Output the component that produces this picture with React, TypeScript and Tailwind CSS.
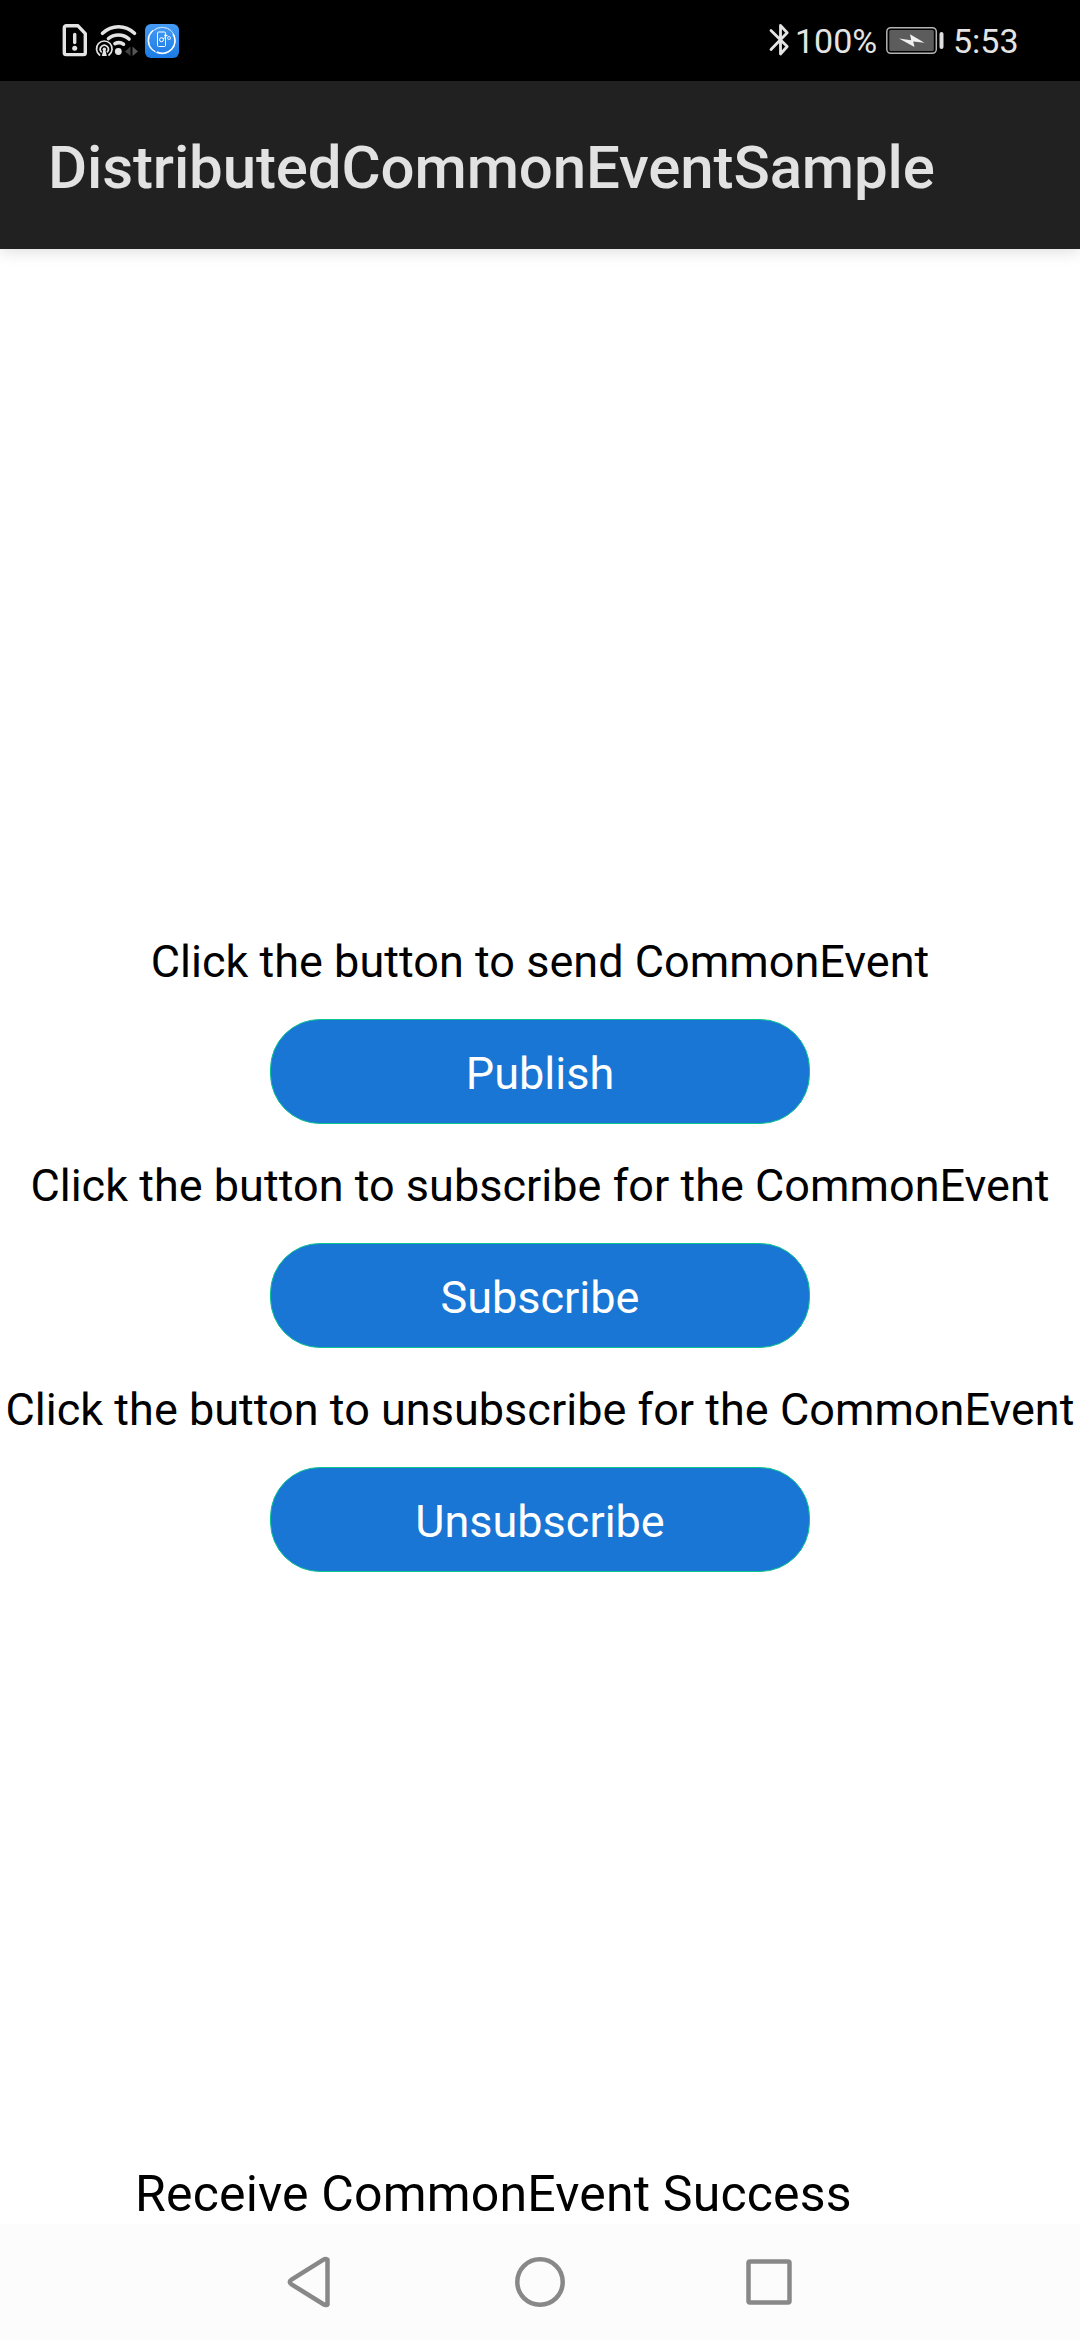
import React from 'react';

const SimAlertIcon = () => (
  <svg className="absolute left-[62px] top-[24px]" width="26" height="34" viewBox="0 0 26 34" fill="none">
    <path d="M4.500 2.200H16L23.300 10V29.200Q23.300 31 21.500 31H4.300Q2.300 31 2.300 29.200V4.200Q2.300 2.200 4.500 2.200Z" stroke="#e4e4e4" strokeWidth="3.4" strokeLinejoin="round" transform="translate(0 -.4)" />
    <path d="M12.700 10.500V18.500" stroke="#e4e4e4" strokeWidth="3.400" strokeLinecap="round" />
    <circle cx="12.700" cy="24.300" r="2.500" fill="#e4e4e4" />
  </svg>
);

const WifiIcon = () => (
  <svg className="absolute left-[95px] top-[24px]" width="44" height="34" viewBox="0 0 44 34" fill="none">
    <g stroke="#e4e4e4" strokeWidth="3.6" strokeLinecap="round">
      <path d="M7.500 9.300Q14.500 2.800 23.500 2.800Q32.500 2.800 39.500 9.300" />
      <path d="M13.500 14.500Q17.500 11 23.500 11Q29.500 11 34 15" />
      <path d="M20 19.700Q24.500 17.300 28.500 20.200" />
    </g>
    <circle cx="23.300" cy="27.500" r="3.400" fill="#e4e4e4" />
    <g stroke="#e4e4e4" strokeWidth="1.700" strokeLinecap="round">
      <path d="M4.600 31A7.800 7.800 0 1 1 14 31" />
      <path d="M6.200 27.800A4 4 0 1 1 12.400 27.800" />
    </g>
    <circle cx="9.300" cy="25.200" r="1.700" fill="#e4e4e4" />
    <path d="M8.300 26H10.300L11.800 32H6.800Z" fill="#e4e4e4" />
    <path d="M35.500 22.500V32L30 27.500Z" fill="#3f3f3f" />
    <path d="M37.500 22.500V32L43 27.500Z" fill="#565656" />
  </svg>
);

const PhoneAppIcon = () => (
  <svg className="absolute left-[145px] top-[24px]" width="34" height="34" viewBox="0 0 34 34" fill="none">
    <defs>
      <linearGradient id="app-blue" x1="0" y1="0" x2="0" y2="1">
        <stop offset="0" stopColor="#459bf5" />
        <stop offset="1" stopColor="#1b7be4" />
      </linearGradient>
    </defs>
    <rect width="34" height="34" rx="6" fill="url(#app-blue)" />
    <circle cx="17" cy="16.500" r="13.300" stroke="#d5e8fc" strokeWidth=".9" />
    <path d="M8 6.500A12.500 12.500 0 0 0 10 27.500" stroke="#fff" strokeWidth="1.300" />
    <path d="M28 10A12.500 12.500 0 0 1 12 28" stroke="#fff" strokeWidth="1.500" />
    <path d="M10 6A13 13 0 0 1 26 6.500" stroke="#b9d8fa" strokeWidth="1" strokeDasharray="3 1" />
    <rect x="12.500" y="8" width="8" height="14.500" rx="1" stroke="#fff" strokeWidth="1" />
    <circle cx="16.500" cy="15.700" r="2" stroke="#fff" strokeWidth="1" />
    <path d="M18 14.500L20.500 13.500M20.500 11.500H22.500" stroke="#fff" strokeWidth=".9" />
    <circle cx="20.500" cy="11.500" r="1.200" fill="#fff" />
    <circle cx="24" cy="14" r="1.500" stroke="#fff" strokeWidth=".8" />
  </svg>
);

const BluetoothIcon = () => (
  <svg className="absolute left-[769px] top-[23px]" width="22" height="34" viewBox="0 0 22 34" fill="none" stroke="#e4e4e4" strokeWidth="2.800" strokeLinejoin="round" strokeLinecap="round">
    <path d="M2 7.500L18.200 23.500L11.500 31V2.500L18.200 9.800L2 26.500" />
  </svg>
);

const BatteryIcon = () => (
  <svg className="absolute left-[886px] top-[26px]" width="59" height="29" viewBox="0 0 59 29" fill="none">
    <rect x=".8" y="1.700" width="49.500" height="25.600" rx="4" stroke="#b4b4b4" strokeWidth="1.500" />
    <rect x="3.300" y="4" width="44.500" height="21" rx="1.500" fill="#5c5c5c" />
    <path d="M13 12.500L25.200 14.200L24 8.200L38.500 16.800L27.200 15.600L28.500 21Z" fill="#f0f0f0" />
    <rect x="53.500" y="6" width="4" height="17" rx="2" fill="#dedede" />
  </svg>
);

const actions = [
  { hint: 'Click the button to send CommonEvent', label: 'Publish' },
  { hint: 'Click the button to subscribe for the CommonEvent', label: 'Subscribe' },
  { hint: 'Click the button to unsubscribe for the CommonEvent', label: 'Unsubscribe' },
];

export default function App() {
  return (
    <div className="flex h-[2340px] w-[1080px] flex-col overflow-hidden bg-white font-['Roboto',sans-serif]">
      <div className="relative h-[81px] shrink-0 bg-black text-[34px] leading-[40px] text-[#e4e4e4]">
        <SimAlertIcon />
        <WifiIcon />
        <PhoneAppIcon />
        <BluetoothIcon />
        <span className="absolute left-[795px] top-[21px]">100%</span>
        <BatteryIcon />
        <span className="absolute left-[953px] top-[21px]">5:53</span>
      </div>
      <header className="h-[168px] shrink-0 bg-[#212121] pl-12 pt-[51px] shadow-[0_3px_14px_rgba(0,0,0,0.13)]">
        <h1 className="whitespace-nowrap text-[60px] font-medium leading-[72px] tracking-[-0.12px] text-[#e2e2e2]">DistributedCommonEventSample</h1>
      </header>
      <main className="flex grow flex-col">
        <div className="mt-[683px] flex flex-col gap-[29px]">
          {actions.map(({ hint, label }) => (
            <section key={label} className="flex h-[195px] flex-col items-center">
              <p className="h-[87px] whitespace-nowrap text-[45px] leading-[60px] tracking-[0.02px] text-black">{hint}</p>
              <button className="h-[105px] w-[540px] rounded-[50px] border border-[#0cc58f] bg-[#1976d4] pt-[5px] text-[45px] leading-[60px] text-white">
                {label}
              </button>
            </section>
          ))}
        </div>
        <p className="mt-auto mb-[1px] pl-[135px] text-[50px] leading-[58px] tracking-[0.17px] text-black">Receive CommonEvent Success</p>
      </main>
      <nav className="flex h-[116px] shrink-0 justify-center bg-[#fcfcfc]">
        <svg width="560" height="116" viewBox="260 2224 560 116" fill="none" stroke="#888" strokeWidth="4.500" strokeLinejoin="round">
          <path d="M327.500 2259.600V2304.600Q325.500 2305.500 323.500 2304.300L291.500 2284.300Q288 2282 291.500 2279.700L323.500 2259.700Q325.500 2258.500 327.500 2259.600Z" />
          <circle cx="540" cy="2282" r="22.700" />
          <rect x="748.500" y="2261.500" width="41" height="41" rx="1.500" />
        </svg>
      </nav>
    </div>
  );
}
